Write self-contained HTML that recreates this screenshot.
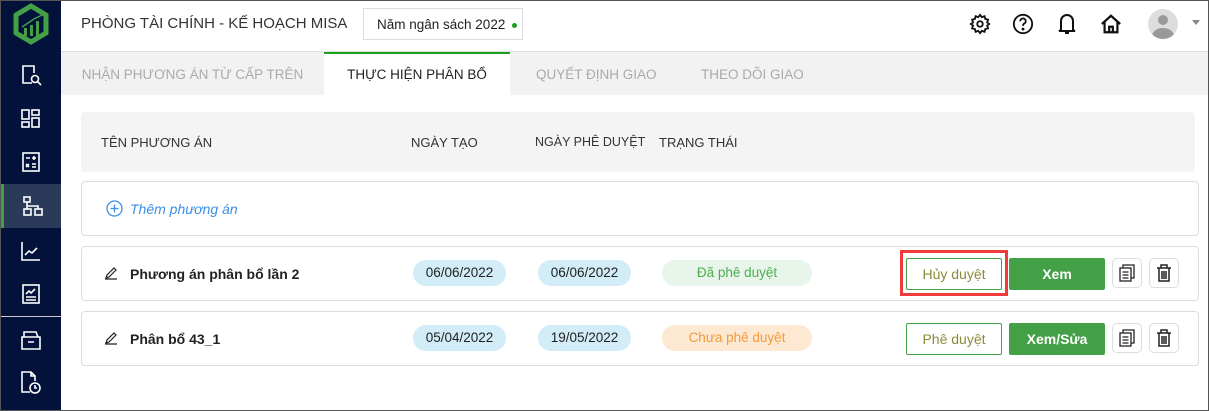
<!DOCTYPE html>
<html><head><meta charset="utf-8"><style>
*{box-sizing:border-box;margin:0;padding:0}
body{width:1209px;height:411px;overflow:hidden;font-family:"Liberation Sans",Arial,sans-serif;background:#fff;position:relative}
.frame{position:absolute;left:0;top:0;width:1209px;height:411px;border:1px solid #555;z-index:9;pointer-events:none}
.sb{position:absolute;left:0;top:0;width:61px;height:411px;background:#02123a}
.sb .it{position:absolute;left:0;width:61px;height:44px;display:flex;align-items:center;justify-content:center}
.sb .act{background:#2b3a58;border-left:4px solid #43a047}
.abs{position:absolute;white-space:nowrap}
.hdr{left:61px;top:0;width:1148px;height:52px;border-bottom:1px solid #ddd}
.title{left:81px;top:15px;font-size:15px;color:#333}
.chip{left:363px;top:8px;width:160px;height:32px;border:1px solid #ddd;font-size:13.5px;color:#222;padding:8px 0 0 13px}
.tabs{left:61px;top:52px;width:1148px;height:43px;background:#f2f2f2}
.tab{position:absolute;top:52px;height:43px;font-size:13.5px;color:#aaa;padding-top:15px;white-space:nowrap}
.thead{left:81px;top:112px;width:1114px;height:60px;background:#f4f4f4;border-radius:4px}
.th{position:absolute;top:135px;font-size:13px;color:#333;white-space:nowrap}
.card{position:absolute;left:81px;width:1118px;height:55px;border:1px solid #ddd;border-radius:4px;background:#fff}
.pill{position:absolute;height:26px;border-radius:13px;font-size:13.5px;text-align:center;line-height:26px}
.d{background:#d2ecf8;color:#222;width:93px}
.btn{position:absolute;height:32px;font-size:14px;text-align:center;line-height:30px;border-radius:2px}
.ob{border:1px solid #43a047;color:#8b8b3a;width:96px;background:#fff}
.gb{background:#43a047;color:#fff;font-weight:bold;width:96px;line-height:32px}
.ib{width:30px;height:30px;border:1px solid #ddd;border-radius:5px;display:flex;align-items:center;justify-content:center}
.nm{position:absolute;left:130px;font-size:14px;font-weight:bold;color:#222}
</style></head><body>
<div class="frame"></div>
<div class="sb">
 <div class="it" style="top:2px"><svg width="38" height="42" viewBox="0 0 38 42"><path d="M19 3 L34 12 L34 30 L19 39 L4 30 L4 12 Z" fill="none" stroke="#43a047" stroke-width="5"/><rect x="12" y="25" width="3" height="8" fill="#43a047"/><rect x="18" y="22" width="3" height="11" fill="#43a047"/><rect x="24" y="18" width="3" height="15" fill="#43a047"/><path d="M10 24 L22 16 L30 12" stroke="#43a047" stroke-width="1.5" fill="none"/></svg></div>
 <div class="it" style="top:53px"><svg width="22" height="22" fill="none" stroke="#fff" stroke-width="1.6"><path d="M12 19H3V2h11v7"/><circle cx="15" cy="15" r="3.5"/><path d="M17.5 17.5L21 21"/></svg></div>
 <div class="it" style="top:97px"><svg width="20" height="20" fill="none" stroke="#fff" stroke-width="1.6"><rect x="1" y="1" width="7" height="9"/><rect x="1" y="13" width="7" height="5"/><rect x="11" y="1" width="7" height="5"/><rect x="11" y="9" width="7" height="9"/></svg></div>
 <div class="it" style="top:140px"><svg width="18" height="20" fill="none" stroke="#fff" stroke-width="1.6"><rect x="1" y="1" width="16" height="18"/><path d="M4 6h4M12 4v4M10 6h4M4 12l3 3M7 12l-3 3M10 12h4M10 15h4"/></svg></div>
 <div class="it act" style="top:184px"><svg width="20" height="20" fill="none" stroke="#fff" stroke-width="1.6"><rect x="1" y="1" width="6" height="5"/><rect x="1" y="13" width="7" height="6"/><rect x="12" y="13" width="7" height="6"/><path d="M4 6v4h11v3M4 10v3"/></svg></div>
 <div class="it" style="top:229px"><svg width="20" height="20" fill="none" stroke="#fff" stroke-width="1.6"><path d="M1 1v18h18M4 14l4-4 3 2 5-5"/></svg></div>
 <div class="it" style="top:272px"><svg width="18" height="20" fill="none" stroke="#fff" stroke-width="1.6"><rect x="1" y="1" width="16" height="18"/><path d="M4 10l3-3 2 2 4-4M4 13h10M4 16h10"/></svg></div>
 <div style="position:absolute;left:0;top:316px;width:61px;height:1px;background:#ccc"></div>
 <div class="it" style="top:318px"><svg width="20" height="20" fill="none" stroke="#fff" stroke-width="1.6"><path d="M1 7h18v12H1zM3 7V2h12l2 5M7 12h6"/></svg></div>
 <div class="it" style="top:361px"><svg width="22" height="24" fill="none" stroke="#fff" stroke-width="1.6"><path d="M10 21H2V1h9l4 4v5M11 1v4h4"/><circle cx="15" cy="17" r="5"/><path d="M15 14v3h2"/></svg></div>
</div>
<div class="abs hdr"></div>
<div class="abs title">PHÒNG TÀI CHÍNH - KẾ HOẠCH MISA</div>
<div class="abs chip">Năm ngân sách 2022 <span style="display:inline-block;width:5px;height:5px;border-radius:50%;background:#1aa01a;vertical-align:middle;margin-left:3px"></span></div>
<svg class="abs" style="left:969px;top:13px" width="22" height="22" viewBox="0 0 24 24" fill="none" stroke="#111" stroke-width="2"><circle cx="12" cy="12" r="3"/><path d="M12 2l2 2.5 3-1 .8 3 3 .8-1 3L22 12l-2.2 1.7 1 3-3 .8-.8 3-3-1L12 22l-1.8-2.5-3 1-.8-3-3-.8 1-3L2 12l2.4-1.7-1-3 3-.8.8-3 3 1z"/></svg>
<svg class="abs" style="left:1012px;top:13px" width="22" height="22" viewBox="0 0 24 24" fill="none" stroke="#111" stroke-width="2"><circle cx="12" cy="12" r="10"/><path d="M9 9a3 3 0 1 1 4 2.8c-1 .4-1 1.2-1 2.2"/><circle cx="12" cy="17.5" r=".6" fill="#111"/></svg>
<svg class="abs" style="left:1057px;top:12px" width="20" height="24" viewBox="0 0 20 24" fill="none" stroke="#111" stroke-width="2"><path d="M4 18V9a6 6 0 0 1 12 0v9l2 1H2zM8 21h4"/></svg>
<svg class="abs" style="left:1100px;top:13px" width="22" height="22" viewBox="0 0 24 24" fill="none" stroke="#111" stroke-width="2.4"><path d="M2 12L12 3l10 9M5 10v11h14V10M10 21v-6h4v6"/></svg>
<div class="abs" style="left:1148px;top:9px;width:30px;height:30px;border-radius:50%;background:#ddd;overflow:hidden"><div style="position:absolute;left:10px;top:6px;width:10px;height:10px;border-radius:50%;background:#999"></div><div style="position:absolute;left:4px;top:19px;width:22px;height:16px;border-radius:50%;background:#999"></div></div>
<div class="abs" style="left:1192px;top:20px;border:4px solid transparent;border-top:5px solid #888"></div>
<div class="abs tabs"></div>
<div class="tab" style="left:61px;width:263px;text-align:center">NHẬN PHƯƠNG ÁN TỪ CẤP TRÊN</div>
<div class="tab" style="left:324px;width:186px;background:#fff;border-top:2px solid #1aa01a;color:#222;text-align:center;padding-top:13px">THỰC HIỆN PHÂN BỔ</div>
<div class="tab" style="left:536px">QUYẾT ĐỊNH GIAO</div>
<div class="tab" style="left:701px">THEO DÕI GIAO</div>
<div class="abs thead"></div>
<div class="th" style="left:101px">TÊN PHƯƠNG ÁN</div>
<div class="th" style="left:411px">NGÀY TẠO</div>
<div class="th" style="left:535px;font-size:12.5px">NGÀY PHÊ DUYỆT</div>
<div class="th" style="left:659px">TRẠNG THÁI</div>
<div class="card" style="top:181px"></div>
<svg class="abs" style="left:106px;top:200px" width="17" height="17" fill="none" stroke="#3a8ee6" stroke-width="1.3"><circle cx="8.5" cy="8.5" r="7.5"/><path d="M8.5 4.5v8M4.5 8.5h8"/></svg>
<div class="abs" style="left:130px;top:201px;font-size:14px;font-style:italic;color:#3a8ee6">Thêm phương án</div>

<div class="card" style="top:246px"></div>
<svg class="abs" style="left:104px;top:266px" width="14" height="14" fill="none" stroke="#222" stroke-width="1.2"><path d="M1 13h12M2 12l1-3 7-7 2 2-7 7z"/></svg>
<div class="nm" style="top:266px">Phương án phân bổ lần 2</div>
<div class="pill d" style="left:413px;top:260px">06/06/2022</div>
<div class="pill d" style="left:538px;top:260px">06/06/2022</div>
<div class="pill" style="left:662px;top:260px;width:150px;background:#e8f5ea;color:#4caf50">Đã phê duyệt</div>
<div class="abs" style="left:900px;top:250px;width:108px;height:46px;border:3px solid #ef3b3b"></div>
<div class="btn ob" style="left:906px;top:258px">Hủy duyệt</div>
<div class="btn gb" style="left:1009px;top:258px">Xem</div>
<div class="abs ib" style="left:1112px;top:258px"><svg width="16" height="18" fill="none" stroke="#222" stroke-width="1.3"><rect x="1" y="4" width="11" height="13"/><path d="M4 4V1h11v13h-3M3.5 8h6M3.5 11h6M3.5 14h6"/></svg></div>
<div class="abs ib" style="left:1149px;top:258px"><svg width="16" height="18" fill="none" stroke="#222" stroke-width="1.5"><path d="M1 4h14M5 4V1h6v3M3 4v13h10V4M6 7v8M8 7v8M10 7v8"/></svg></div>

<div class="card" style="top:311px"></div>
<svg class="abs" style="left:104px;top:331px" width="14" height="14" fill="none" stroke="#222" stroke-width="1.2"><path d="M1 13h12M2 12l1-3 7-7 2 2-7 7z"/></svg>
<div class="nm" style="top:331px">Phân bổ 43_1</div>
<div class="pill d" style="left:413px;top:325px">05/04/2022</div>
<div class="pill d" style="left:538px;top:325px">19/05/2022</div>
<div class="pill" style="left:662px;top:325px;width:150px;background:#fde8d2;color:#f39a3a">Chưa phê duyệt</div>
<div class="btn ob" style="left:906px;top:323px">Phê duyệt</div>
<div class="btn gb" style="left:1009px;top:323px">Xem/Sửa</div>
<div class="abs ib" style="left:1112px;top:323px"><svg width="16" height="18" fill="none" stroke="#222" stroke-width="1.3"><rect x="1" y="4" width="11" height="13"/><path d="M4 4V1h11v13h-3M3.5 8h6M3.5 11h6M3.5 14h6"/></svg></div>
<div class="abs ib" style="left:1149px;top:323px"><svg width="16" height="18" fill="none" stroke="#222" stroke-width="1.5"><path d="M1 4h14M5 4V1h6v3M3 4v13h10V4M6 7v8M8 7v8M10 7v8"/></svg></div>
</body></html>
